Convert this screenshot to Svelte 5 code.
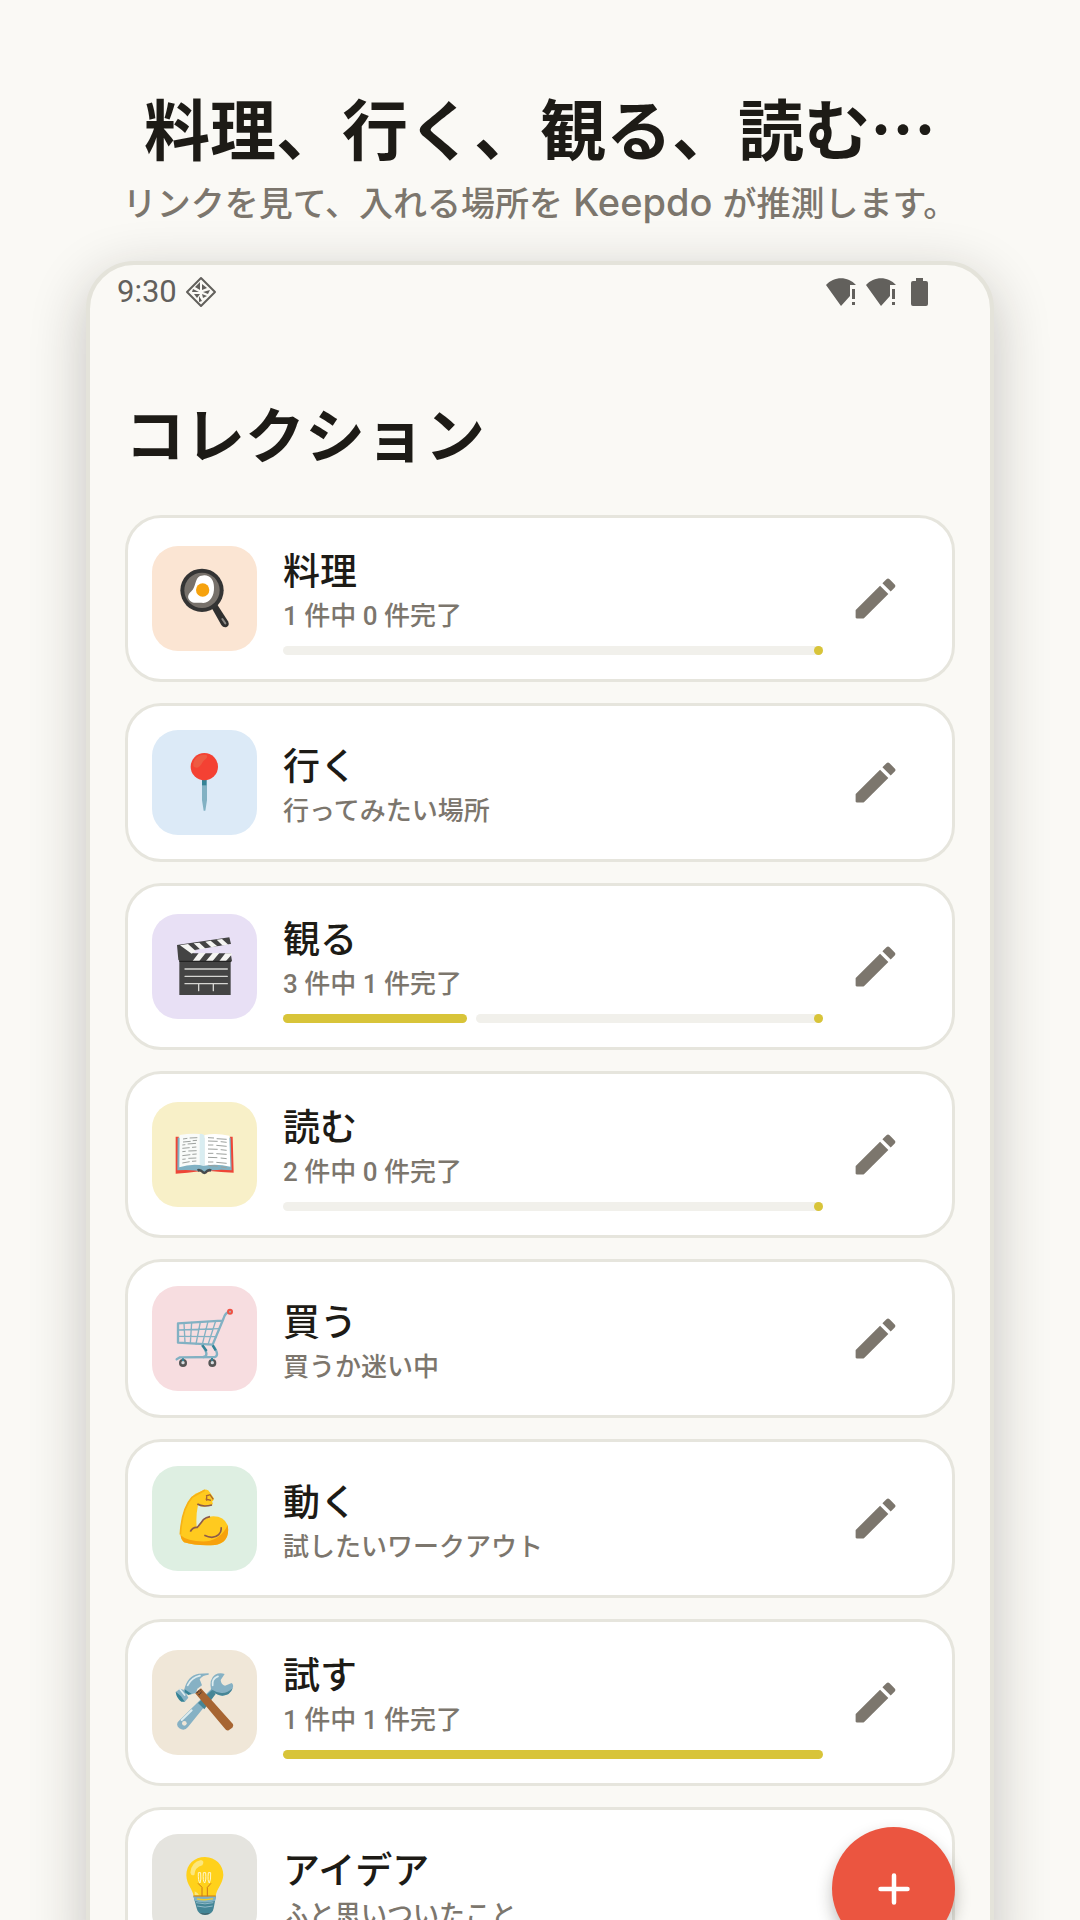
<script>
  // list of collections, viewBox crops each drawing to its tile
  const collections = [
    { name: "料理", icon: "pan", view: "36 48 315 315", tint: "peach", total: 1, done: 0 },
    { name: "行く", icon: "pin", view: "36 30 315 315", tint: "blue", note: "行ってみたい場所" },
    { name: "観る", icon: "clapper", view: "36 42 315 315", tint: "purple", total: 3, done: 1 },
    { name: "読む", icon: "book", view: "36 38 315 315", tint: "yellow", total: 2, done: 0 },
    { name: "買う", icon: "cart", view: "36 36 315 315", tint: "pink", note: "買うか迷い中" },
    { name: "動く", icon: "arm", view: "36 36 315 315", tint: "green", note: "試したいワークアウト" },
    { name: "試す", icon: "tools", view: "36 33 315 315", tint: "sand", total: 1, done: 1 },
    { name: "アイデア", icon: "bulb", view: "215 165 315 315", tint: "grey", note: "ふと思いついたこと" },
  ];

  const summary = (item) => (item.total ? `${item.total} 件中 ${item.done} 件完了` : item.note);
</script>

<div class="page">
  <header class="intro">
    <h1>料理、行く、観る、読む…</h1>
    <p>リンクを見て、入れる場所を<span class="brand">{" Keepdo "}</span>が推測します。</p>
  </header>

  <main class="phone">
    <div class="status">
      <span class="clock">9:30</span>
      <svg class="diamond" viewBox="0 0 32 32" aria-hidden="true">
        <path d="M16 2 30 16 16 30 2 16Z" fill="none" stroke="currentColor" stroke-width="2" stroke-linejoin="round" />
        <path d="M15 6v8l-5-3zM17 8l5 4-5 2zM8 13l6 3H7zM18 16l7-2-2 4zM9 18h6l-3 4zM17 18l5 2-4 2zM14 20l3 5-3 1z" fill="currentColor" />
      </svg>
      <span class="spacer"></span>
      {#each [1, 2] as network (network)}
        <svg class="signal" viewBox="0 0 32 28" aria-hidden="true">
          <path d="M1 7C9-2 23-2 31 7H25V18L16 28Z" fill="currentColor" />
          <path d="M27 11h3v10h-3zM27 24h3v3h-3z" fill="currentColor" />
        </svg>
      {/each}
      <svg class="battery" viewBox="0 0 17 28" aria-hidden="true">
        <path d="M5 0h7v3h3q2 0 2 2v21q0 2-2 2H2q-2 0-2-2V5q0-2 2-2h3z" fill="currentColor" />
      </svg>
    </div>

    <h2>コレクション</h2>

    <ul class="list">
      {#each collections as item (item.name)}
        <li class="card">
          <div class="tile {item.tint}">
            <svg viewBox={item.view} aria-hidden="true">
              {#if item.icon === "pan"}
                <path d="M214 232 232 224 264 274Q270 286 260 291 250 294 244 285Z" fill="#303030" />
                <path d="M247 267 256 280" stroke="#8b8986" stroke-width="6" stroke-linecap="round" />
                <circle cx="186" cy="181" r="65" fill="#343434" />
                <circle cx="186" cy="181" r="53" fill="#77716b" />
                <path d="M193 136C212 137 222 151 222 172 223 197 211 218 190 219 175 216 168 221 155 216 139 206 143 194 154 184 169 170 164 145 180 138Z" fill="#fff" />
                <circle cx="188" cy="180" r="20" fill="#f6a20d" />
              {:else if item.icon === "pin"}
                <path d="M186 178h15v62l-5 32h-5l-5-32z" fill="#82b1c3" />
                <path d="M186 178h13v18h-13z" fill="#358396" />
                <circle cx="193" cy="140" r="41" fill="#f44133" />
                <path d="M160 130C164 110 183 102 199 105 207 111 196 116 188 126 180 145 166 147 160 138Z" fill="#ee5a42" />
              {:else if item.icon === "clapper"}
                <path d="M111 135 268 112 273 132 160 151 272 160 276 183 272 187V285H118V183L115 179Z" fill="#444" />
                <path d="M158 152 273 133V160H160Z" fill="#e8e0f5" />
                <path d="M120 136l24-4 24 22-13 7zM161 130l17-2 19 18-17 2zM196 125l16-3 20 17-18 3zM230 119l16-2 19 17-18 2z" fill="#f5f5f2" />
                <path d="M176 159h21l-19 24h-20zM218 159h20l-20 24h-20zM256 160h18l2 3-18 20h-20z" fill="#f5f5f2" />
                <path d="M118 184H272" stroke="#222" stroke-width="4" />
                <path d="M135 207H262M135 229H262M135 251H262M176 251v21M220 251v21" stroke="#d5d5d2" stroke-width="4" stroke-linecap="round" />
              {:else if item.icon === "book"}
                <path d="M107 142H116L125 235 270 236 270 142H278L281 250Q241 249 210 245L194 253 179 246Q142 252 107 253Z" fill="#ee4637" />
                <path d="M113 145 272 145 275 243Q230 237 193 248 153 239 112 243Z" fill="#80b1c3" />
                <path d="M119 137Q165 130 193 137L193 229Q153 222 118 234Z" fill="#f9fbf9" />
                <path d="M193 137Q228 130 268 139L271 232Q230 222 193 229Z" fill="#fff" />
                <path d="M179 134Q187 132 193 138V229L179 226Z" fill="#d9edf1" />
                <path d="M129 149l13-2m7-1 23-1m-43 13 23-2m6-2 13-1m-44 14 9-1m7-2 25-2m-41 15 22-2m7-1 13-1m-42 14 10-1m8-1 25-1m-43 15 24-3m6-1 13-1m-43 16 10-1m8-2 24-1m-42 15 22-4m7-1 13-1" fill="none" stroke="#9da19e" stroke-width="3" />
                <path d="M204 145l18 1m8 2 30 2m-56 5 29 1m9 1 18 2m-56 8 16 0m9 1 31 3m-56 8 29 1m9 1 18 2m-56 9 16 0m9 1 31 2m-56 9 28 1m10 1 18 2m-56 10 16 0m9 1 31 3m-55 6 28 3m10 2 17 2" fill="none" stroke="#9da19e" stroke-width="3" />
                <path d="M171 240Q180 235 193 247 205 234 215 240L212 247Q202 244 200 252L193 255 186 252Q184 244 174 247Z" fill="#444b4d" />
              {:else if item.icon === "cart"}
                <g fill="none" stroke="#82b1c3" stroke-linejoin="round" stroke-linecap="round">
                  <path d="M187 214Q210 246 190 249" stroke-width="7" />
                  <path d="M267 114Q256 115 250 135L218 212 114 206V148L246 140M218 213Q240 243 225 249L120 250 110 256" stroke-width="7" />
                  <path d="M132 147 135 206M155 145 151 208M181 144 168 210M204 142 187 211M227 141 204 212M114 168 238 164M115 187 229 188" stroke-width="4" />
                </g>
                <path d="M187 214l13 17M218 214l9 15" stroke="#358396" stroke-width="7" />
                <circle cx="270" cy="113" r="9" fill="#ef5143" />
                <circle cx="270" cy="113" r="3" fill="#a9b5b9" />
                <circle cx="129" cy="267" r="12" fill="#555" />
                <circle cx="129" cy="266" r="5" fill="#d6dde0" />
                <circle cx="217" cy="267" r="12" fill="#555" />
                <circle cx="217" cy="266" r="5" fill="#d6dde0" />
                <path d="M129 253v8M216 252v8" stroke="#358396" stroke-width="6" />
              {:else if item.icon === "arm"}
                <path d="M166 119 195 107Q204 105 211 117L221 132Q222 139 216 143 221 149 216 153L193 158Q182 159 174 153 167 186 170 219L178 216Q195 187 220 187 252 187 263 214C270 250 252 270 225 273 188 276 157 272 132 265 119 255 120 230 124 206 132 163 145 136 166 119Z" fill="#ffca1f" />
                <path d="M263 214C270 250 252 270 225 273 188 276 157 272 132 265Q123 257 121 243 143 264 200 262 242 257 263 214Z" fill="#f7a20d" />
                <path d="M121 242Q125 165 156 130L195 108" fill="none" stroke="#f7b216" stroke-width="5" />
                <path d="M151 233Q157 219 172 220 182 208 190 197 198 190 210 188M193 244Q220 257 236 242 246 231 243 220M172 150Q187 160 216 153" fill="none" stroke="#8d5b49" stroke-width="5" />
                <path d="M198 126 210 122 220 136M197 135 213 139M200 124v16" fill="none" stroke="#a76532" stroke-width="4" />
              {:else if item.icon === "tools"}
                <path d="M117 245 213 151Q207 120 225 107 240 100 254 105L242 123Q243 137 255 140L275 132Q282 137 278 148 270 170 247 170 233 170 226 163L144 264Q133 278 118 268 105 256 117 245Z" fill="#86b1c4" />
                <path d="M174 192 215 154 227 165 193 211ZM213 151Q226 168 247 170 270 170 278 148 263 163 244 162 225 159 213 151Z" fill="#478696" />
                <path d="M125 243 155 214" stroke="#ddecef" stroke-width="6" stroke-linecap="round" />
                <path d="M218 139Q215 118 234 112" fill="none" stroke="#ddecef" stroke-width="5" stroke-linecap="round" />
                <circle cx="133" cy="253" r="7" fill="#efe6d7" />
                <path d="M165 162 183 148 276 252Q283 258 277 266L266 274Q260 277 253 267Z" fill="#a76532" />
                <path d="M133 151C139 125 153 108 176 104L206 103 206 107Q188 108 179 121L186 139 172 149 168 162 153 166 134 158Z" fill="#86b1c4" />
                <path d="M107 159 120 149 133 153 145 176 134 189 121 181Z" fill="#86b1c4" />
                <path d="M107 158 123 172 134 188 124 188Q109 177 107 158ZM134 151 155 165 145 168 134 160Z" fill="#358396" />
                <path d="M143 139Q154 116 180 110M120 151 134 168" fill="none" stroke="#ddecef" stroke-width="5" stroke-linecap="round" />
                <path d="M170 161l12-9M176 168l10-10" stroke="#4d3b32" stroke-width="4" stroke-dasharray="4 2" />
              {:else}
                <path d="M339 350 407 350 400 388Q397 407 374 408 353 407 349 388Z" fill="#448596" />
                <path d="M339 350h68l-3 16q-29 9-61 0z" fill="#82b1c3" />
                <path d="M340 352C337 329 319 319 318 289 318 256 342 234 374 234 406 235 429 258 429 288 427 317 409 327 406 352Z" fill="#ffd11b" />
                <path d="M330 281Q333 249 362 243 374 246 366 259 344 264 342 288 333 292 330 281Z" fill="#fce77d" />
                <path d="M343 337q10 4 13 12h-13z" fill="#fce77d" />
                <path d="M353 313 365 325V352M392 313 381 325V352M340 351H406" fill="none" stroke="#cb7718" stroke-width="3" />
                <path d="M354 281h7q2 23-2 31-6-5-5-31zM369 281h7q2 23-3 31-6-5-4-31zM384 281h7q1 23-4 31-6-5-3-31z" fill="none" stroke="#fff7cc" stroke-width="3" />
                <path d="M349 361q25 5 48 0M347 371q28 7 52 0M350 381q25 7 47 0" fill="none" stroke="#91bac8" stroke-width="3" />
                <path d="M350 360q24 5 48-1" fill="none" stroke="#edce2b" stroke-width="4" />
                <path d="M358 402q15 4 31 0-14 9-31 0z" fill="#41494b" />
              {/if}
            </svg>
          </div>

          <div class="info">
            <h3>{item.name}</h3>
            <p>{summary(item)}</p>
            {#if item.total}
              <div
                class="progress"
                role="progressbar"
                aria-label={item.name}
                aria-valuenow={item.done}
                aria-valuemin="0"
                aria-valuemax={item.total}
              >
                {#if item.done > 0}
                  <span class="fill" style="width: calc({(item.done / item.total) * 100}% + 4px)"></span>
                {/if}
                {#if item.done < item.total}
                  <span class="track"></span>
                {/if}
              </div>
            {/if}
          </div>

          <button class="edit" aria-label="編集">
            <svg viewBox="0 0 24 24" aria-hidden="true">
              <path d="M3 17.46v3.04c0 .28.22.5.5.5h3.04c.13 0 .26-.05.35-.15L17.81 9.94l-3.75-3.75L3.15 17.1c-.1.1-.15.22-.15.36zM20.71 7.04a.996.996 0 0 0 0-1.41l-2.34-2.34a.996.996 0 0 0-1.41 0l-1.83 1.83 3.75 3.75 1.83-1.83z" fill="currentColor" />
            </svg>
          </button>
        </li>
      {/each}
    </ul>

    <button class="add" aria-label="追加">
      <svg viewBox="0 0 32 32" aria-hidden="true">
        <path d="M16 2.500V29.500M2.500 16H29.500" stroke="currentColor" stroke-width="4.500" stroke-linecap="round" />
      </svg>
    </button>
  </main>
</div>

<style>
  :global(body) {
    margin: 0;
    background: #faf9f5;
  }

  .page {
    box-sizing: border-box;
    display: flex;
    flex-direction: column;
    height: 100vh;
    padding: 79px 86px 0;
    overflow: hidden;
    color: #1d1b16;
    font-family: Roboto, "Noto Sans CJK JP", sans-serif;
  }

  h1,
  h2,
  h3,
  p,
  ul {
    margin: 0;
    padding: 0;
  }

  .intro {
    margin: 0 -40px;
    text-align: center;
  }

  .intro h1 {
    font-family: "Noto Sans CJK JP", sans-serif;
    font-size: 66px;
    font-weight: 600;
    line-height: 94px;
  }

  .intro p {
    color: #7c766d;
    font-size: 34px;
    font-weight: 500;
    line-height: 62px;
  }

  .brand {
    font-family: Inter, sans-serif;
    font-size: 38px;
    line-height: 1;
    white-space: pre;
  }

  .phone {
    position: relative;
    display: flex;
    flex: 1;
    flex-direction: column;
    min-height: 0;
    margin: 26px 0 -60px;
    padding: 0 35px;
    overflow: hidden;
    border: 4px solid #e4e3da;
    border-radius: 48px;
    background: #faf9f5;
    box-shadow: 0 16px 56px rgba(29, 27, 22, 0.24);
  }

  .status {
    display: flex;
    flex: none;
    align-items: center;
    gap: 8px;
    height: 54px;
    padding-right: 27px;
    margin-left: -8px;
    color: #62605c;
  }

  .clock {
    font-size: 31px;
    line-height: 36px;
  }

  .spacer {
    flex: 1;
  }

  .diamond {
    width: 32px;
    height: 32px;
  }

  .signal {
    width: 32px;
    height: 28px;
  }

  .battery {
    width: 17px;
    height: 28px;
    margin-left: 6px;
  }

  h2 {
    flex: none;
    margin: 74px 0 32px;
    font-size: 60px;
    font-weight: 700;
    line-height: 90px;
  }

  .list {
    display: flex;
    flex-direction: column;
    gap: 21px;
    list-style: none;
  }

  .card {
    display: flex;
    align-items: center;
    padding: 24px;
    border: 3px solid #e6e5dd;
    border-radius: 36px;
    background: #fff;
  }

  .tile {
    flex: none;
    width: 105px;
    height: 105px;
    border-radius: 26px;
  }

  .tile svg {
    display: block;
    width: 100%;
    height: 100%;
  }

  .peach {
    background: #fbe5d3;
  }

  .blue {
    background: #dceaf7;
  }

  .purple {
    background: #e8e0f5;
  }

  .yellow {
    background: #f8f0c8;
  }

  .pink {
    background: #f7dde0;
  }

  .green {
    background: #deefe2;
  }

  .sand {
    background: #f0e7d8;
  }

  .grey {
    background: #e5e4df;
  }

  .info {
    flex: 1;
    min-width: 0;
    padding-top: 4px;
    margin-left: 26px;
  }

  .info h3 {
    font-size: 37px;
    font-weight: 500;
    line-height: 53px;
  }

  .info p {
    color: #7c766d;
    font-size: 26px;
    font-weight: 500;
    line-height: 35px;
  }

  .progress {
    display: flex;
    gap: 9px;
    height: 9px;
    margin-top: 12px;
  }

  .fill {
    max-width: 100%;
    border-radius: 5px;
    background: #d8c439;
  }

  .track {
    display: flex;
    flex: 1;
    justify-content: flex-end;
    border-radius: 5px;
    background: #f1f0eb;
  }

  .track::after {
    width: 9px;
    border-radius: 50%;
    background: #d8c439;
    content: "";
  }

  button {
    display: grid;
    place-items: center;
    padding: 0;
    border: 0;
    cursor: pointer;
  }

  .edit {
    flex: none;
    width: 105px;
    height: 105px;
    background: none;
    color: #7c766d;
  }

  .edit svg {
    width: 53px;
    height: 53px;
  }

  .add {
    position: absolute;
    right: 35px;
    bottom: 26px;
    width: 123px;
    height: 123px;
    border-radius: 50%;
    background: #eb5540;
    box-shadow: 0 8px 16px rgba(29, 27, 22, 0.28);
    color: #fff;
  }

  .add svg {
    width: 32px;
    height: 32px;
  }
</style>
